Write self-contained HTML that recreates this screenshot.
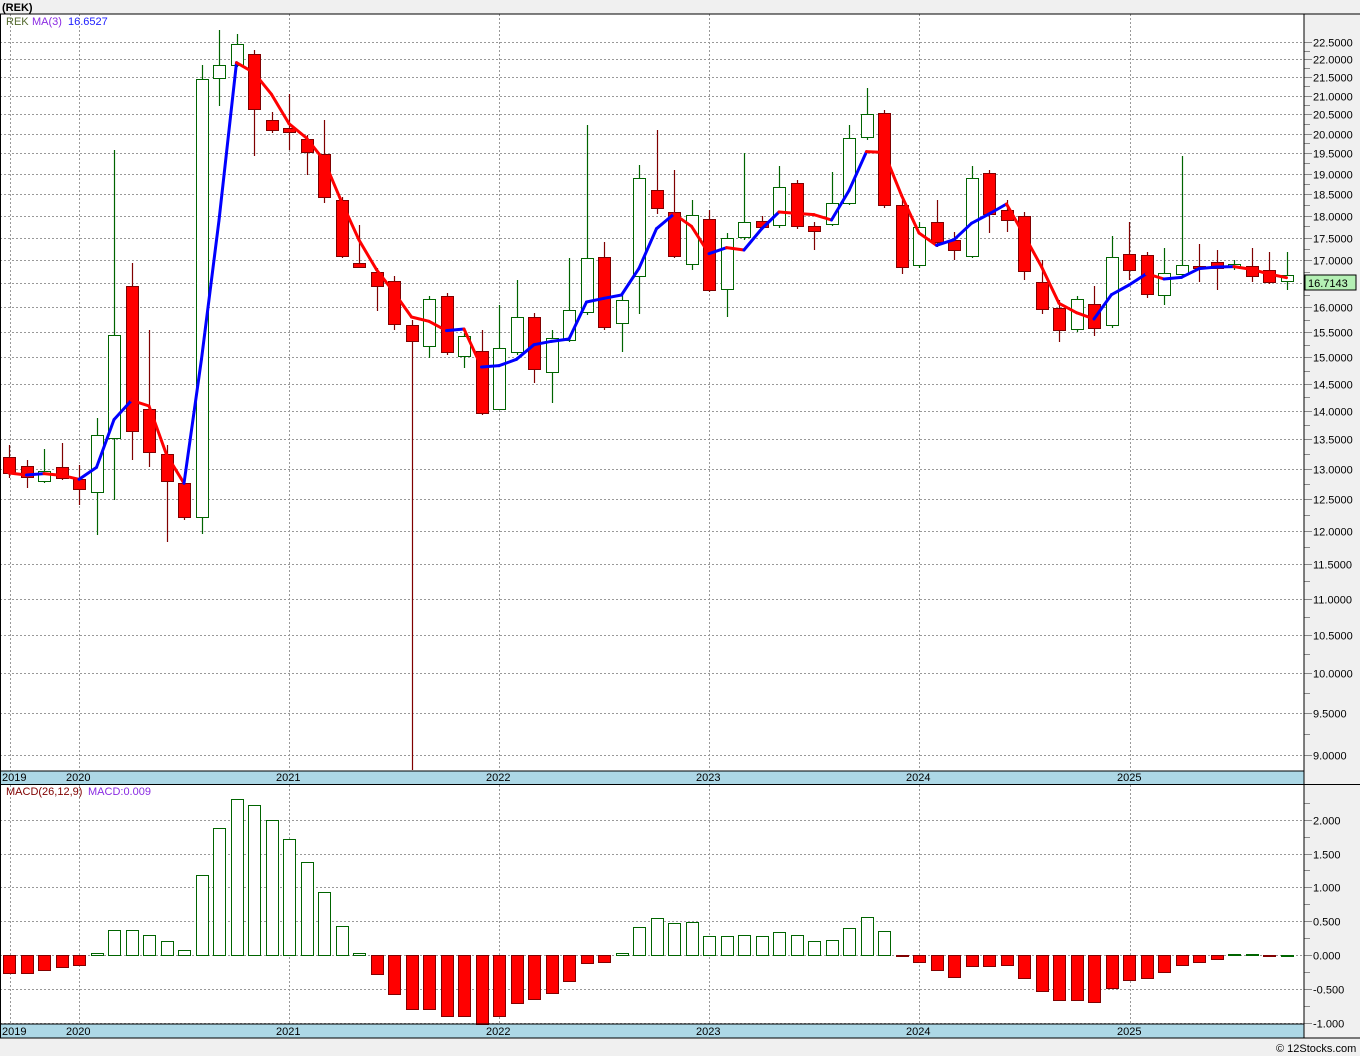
<!DOCTYPE html>
<html><head><meta charset="utf-8"><style>
body{margin:0;background:#f0f0f0;width:1360px;height:1056px;overflow:hidden;font-family:"Liberation Sans",sans-serif}
svg{position:absolute;left:0;top:0}
text{font-family:"Liberation Sans",sans-serif;font-size:11px}
</style></head><body>
<svg id="s" width="1360" height="1056" xmlns="http://www.w3.org/2000/svg">
<rect x="0" y="14" width="1304" height="757" fill="#fff"/>
<rect x="0" y="785" width="1304" height="239" fill="#fff"/>
<rect x="0" y="771" width="1304" height="13" fill="#add8e6"/>
<rect x="0" y="1024" width="1304" height="14" fill="#add8e6"/>
<g id="grid"></g>
<g id="c"></g>
<line x1="1304" y1="14" x2="1304" y2="1038" stroke="#000"/>
<line x1="0" y1="14" x2="1360" y2="14" stroke="#000"/>
<line x1="0" y1="771" x2="1304" y2="771" stroke="#000"/>
<line x1="0" y1="784.5" x2="1360" y2="784.5" stroke="#000"/>
<line x1="0" y1="1024" x2="1304" y2="1024" stroke="#000"/>
<line x1="0" y1="1038" x2="1360" y2="1038" stroke="#000"/>
<line x1="0.5" y1="14" x2="0.5" y2="1038" stroke="#000"/>
<text x="2" y="11" font-weight="bold" font-size="12">(REK)</text>
<text x="6" y="25" fill="#556b2f" font-size="10">REK</text>
<text x="32" y="25" fill="#8a2be2" font-size="10">MA(3)</text>
<text x="68" y="25" fill="#2020ff" font-size="10">16.6527</text>
<text x="6" y="795" fill="#800000" font-size="10">MACD(26,12,9)</text>
<text x="88" y="795" fill="#8a2be2" font-size="10">MACD:0.009</text>
<g font-size="11">
<text x="2" y="781">2019</text><text x="66" y="781">2020</text><text x="276" y="781">2021</text><text x="486" y="781">2022</text><text x="696" y="781">2023</text><text x="906" y="781">2024</text><text x="1117" y="781">2025</text>
<text x="2" y="1035">2019</text><text x="66" y="1035">2020</text><text x="276" y="1035">2021</text><text x="486" y="1035">2022</text><text x="696" y="1035">2023</text><text x="906" y="1035">2024</text><text x="1117" y="1035">2025</text>
</g>
<g id="box"><rect x="1305" y="275" width="51" height="15" fill="#b4f0b4" stroke="#000"/>
<text x="1308" y="287" font-size="11">16.7143</text></g>
<text x="1276" y="1052" font-size="10">© 12Stocks.com</text>
</svg>
<script>
var S="http://www.w3.org/2000/svg";
function el(p,t,a){var e=document.createElementNS(S,t);for(var k in a)e.setAttribute(k,a[k]);p.appendChild(e);return e}
var g=document.getElementById('grid'),c=document.getElementById('c'),s=document.getElementById('s');
function py(p){return 2464.6-778.1*Math.log(p)}
for(var p=9;p<=22.51;p+=0.5){var y=Math.round(py(p))+0.5;
el(g,'line',{x1:0,y1:y,x2:1304,y2:y,stroke:'#999','stroke-dasharray':'2,2'});
el(g,'line',{x1:1304,y1:y,x2:1312,y2:y,stroke:'#888'});
var ym=Math.round(py(p+0.25))+0.5;if(p<22.5)el(g,'line',{x1:1304,y1:ym,x2:1310,y2:ym,stroke:'#888'});
if(Math.abs(p-16.5)>0.01){var t=el(s,'text',{x:1313,y:y+4,'font-size':'11'});t.textContent=p.toFixed(4);}}
[[2,820],[1.5,854],[1,887],[0.5,921],[0,955],[-0.5,989],[-1,1023]].forEach(function(a){var y=a[1]+0.5;
el(g,'line',{x1:0,y1:y,x2:1304,y2:y,stroke:'#999','stroke-dasharray':'2,2'});
el(g,'line',{x1:1304,y1:y,x2:1312,y2:y,stroke:'#888'});
el(g,'line',{x1:1304,y1:y-17,x2:1310,y2:y-17,stroke:'#888'});
var t=el(s,'text',{x:1313,y:y+4,'font-size':'11'});t.textContent=(a[0]<0?'':' ')+a[0].toFixed(3);});
[10,79,289,499,709,919,1130].forEach(function(x){
el(g,'line',{x1:x+.5,y1:14,x2:x+.5,y2:771,stroke:'#999','stroke-dasharray':'2,2'});
el(g,'line',{x1:x+.5,y1:785,x2:x+.5,y2:1024,stroke:'#999','stroke-dasharray':'2,2'});});
var D=[[457,473,445,478,'r'],[466,477,460,488,'r'],[471,481,449,483,'g'],[467,478,443,480,'r'],[479,489,465,505,'r'],[435,492,418,535,'g'],[335,438,150,500,'g'],[286,431,263,460,'r'],[409,452,330,467,'r'],[454,481,445,542,'r'],[483,517,478,520,'r'],[79,517,65,534,'g'],[65,78,30,106,'g'],[44,65,34,67,'g'],[54,109,50,156,'r'],[120,130,112,133,'r'],[128,132,94,150,'r'],[139,152,135,175,'r'],[154,197,120,203,'r'],[200,256,197,258,'r'],[263,267,225,268,'r'],[272,286,268,311,'r'],[281,324,276,330,'r'],[325,341,320,770,'r'],[299,346,296,358,'g'],[296,352,293,355,'r'],[336,356,333,368,'g'],[351,413,330,415,'r'],[348,409,305,410,'g'],[317,352,280,355,'g'],[317,369,313,383,'r'],[338,372,330,403,'g'],[310,340,258,342,'g'],[258,312,125,315,'g'],[257,327,242,330,'r'],[300,323,295,352,'g'],[178,276,165,314,'g'],[190,208,130,214,'r'],[212,256,170,258,'r'],[215,264,200,270,'g'],[219,290,210,292,'r'],[238,289,233,317,'g'],[222,237,153,240,'g'],[221,227,216,229,'r'],[187,225,166,228,'g'],[183,226,180,229,'r'],[226,231,222,250,'r'],[203,224,172,226,'g'],[138,203,125,205,'g'],[114,137,88,140,'g'],[113,205,110,208,'r'],[205,267,200,274,'r'],[227,265,222,268,'g'],[222,242,200,247,'r'],[240,250,232,260,'r'],[178,256,166,258,'g'],[173,214,170,233,'r'],[210,220,200,232,'r'],[216,271,212,280,'r'],[282,309,260,314,'r'],[308,330,300,342,'r'],[299,329,296,332,'g'],[304,328,286,336,'r'],[257,325,236,328,'g'],[254,270,222,280,'r'],[255,294,252,298,'r'],[273,295,248,305,'g'],[265,274,156,276,'g'],[266,268,244,282,'r'],[262,268,250,290,'r'],[264,267,260,270,'g'],[266,276,248,282,'r'],[270,282,252,284,'r'],[275,281,252,290,'g']];
var closes=[];
D.forEach(function(d,i){var x=9+17.5*i,xr=Math.round(x);var r=d[4]=='r';
el(c,'line',{x1:xr+.5,y1:d[2],x2:xr+.5,y2:d[3],stroke:r?'#800000':'#006400','stroke-width':1.2});
el(c,'rect',{x:xr-6+.5,y:d[0]+.5,width:12,height:Math.max(1,d[1]-d[0]),fill:r?'#ff0000':'#fff',stroke:r?'#800000':'#006400'});
closes.push(r?d[1]:d[0]);});
var pts=[];for(var i=0;i<closes.length;i++){var a=closes.slice(Math.max(0,i-2),i+1);pts.push(a.reduce(function(u,v){return u+v},0)/a.length);}
for(var i=1;i<pts.length;i++){el(c,'line',{x1:9+17.5*(i-1),y1:pts[i-1],x2:9+17.5*i,y2:pts[i],stroke:pts[i]>pts[i-1]?'#ff0000':'#0000ff','stroke-width':3,'stroke-linecap':'round'});}
var M=[973,973,970,967,965,953,930,930,935,941,950,875,828,799,805,820,839,862,892,926,953,974,994,1009,1009,1016,1016,1024,1016,1003,999,993,981,963,962,953,927,918,923,922,936,936,935,936,932,935,941,940,928,917,931,956,962,970,977,966,966,965,978,991,1000,1000,1002,988,980,978,972,965,962,959,954,954,956,955];
M.forEach(function(y,i){var x=Math.round(9+17.5*i)-6;var neg=y>955;
if(neg)el(c,'rect',{x:x+.5,y:955.5,width:12,height:y-955,fill:'#ff0000',stroke:'#800000'});
else el(c,'rect',{x:x+.5,y:y+.5,width:12,height:Math.max(1,955-y),fill:'#fff',stroke:'#006400'});});
s.appendChild(document.getElementById('box'));
</script>
</body></html>
